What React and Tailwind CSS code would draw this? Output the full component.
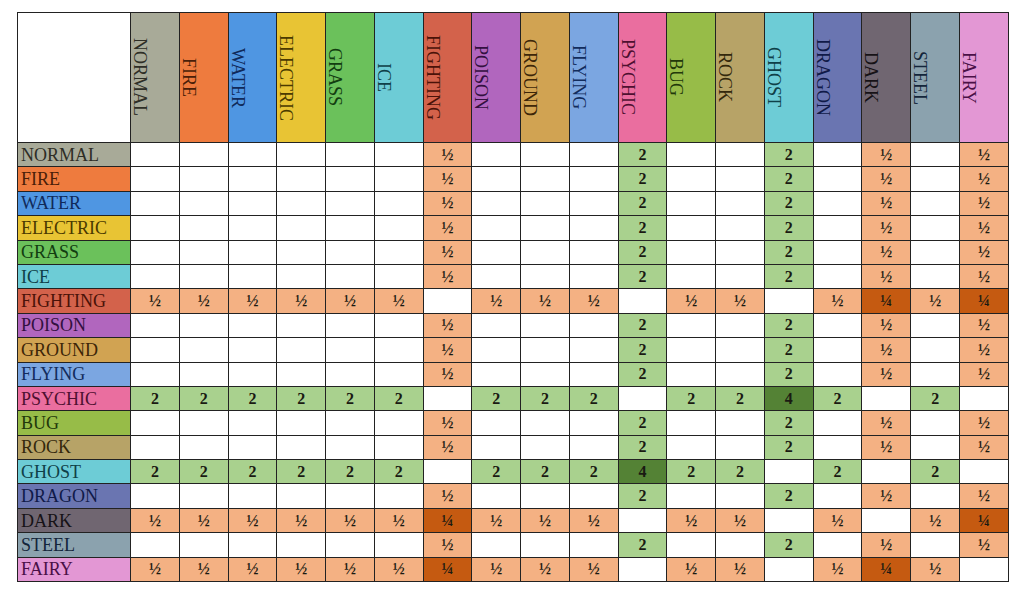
import React from "react";

const types = [
  { n: "NORMAL", bg: "bg-[#a8aa98]", fg: "text-[#2e2e26]" },
  { n: "FIRE", bg: "bg-[#ee7b3e]", fg: "text-[#4a1e08]" },
  { n: "WATER", bg: "bg-[#4f96e2]", fg: "text-[#102a5a]" },
  { n: "ELECTRIC", bg: "bg-[#e8c434]", fg: "text-[#4a3a00]" },
  { n: "GRASS", bg: "bg-[#6bc15b]", fg: "text-[#123d10]" },
  { n: "ICE", bg: "bg-[#6dccd6]", fg: "text-[#0f4048]" },
  { n: "FIGHTING", bg: "bg-[#d3624b]", fg: "text-[#4a1208]" },
  { n: "POISON", bg: "bg-[#b166be]", fg: "text-[#331040]" },
  { n: "GROUND", bg: "bg-[#d1a352]", fg: "text-[#3d2608]" },
  { n: "FLYING", bg: "bg-[#7ba6e1]", fg: "text-[#122c5c]" },
  { n: "PSYCHIC", bg: "bg-[#ea6e9f]", fg: "text-[#4e1030]" },
  { n: "BUG", bg: "bg-[#97bc48]", fg: "text-[#22380a]" },
  { n: "ROCK", bg: "bg-[#b7a367]", fg: "text-[#33280c]" },
  { n: "GHOST", bg: "bg-[#6dccd6]", fg: "text-[#0f4048]" },
  { n: "DRAGON", bg: "bg-[#6a75b1]", fg: "text-[#101a48]" },
  { n: "DARK", bg: "bg-[#706671]", fg: "text-[#161216]" },
  { n: "STEEL", bg: "bg-[#8ba2ae]", fg: "text-[#13253a]" },
  { n: "FAIRY", bg: "bg-[#e397d4]", fg: "text-[#4a1046]" },
];

const H = "½";
const Q = "¼";
const plain = ["", "", "", "", "", "", H, "", "", "", "2", "", "", "2", "", H, "", H];
const fighting = [H, H, H, H, H, H, "", H, H, H, "", H, H, "", H, Q, H, Q];
const psychic = ["2", "2", "2", "2", "2", "2", "", "2", "2", "2", "", "2", "2", "4", "2", "", "2", ""];
const ghost = ["2", "2", "2", "2", "2", "2", "", "2", "2", "2", "4", "2", "2", "", "2", "", "2", ""];
const dark = [H, H, H, H, H, H, Q, H, H, H, "", H, H, "", H, "", H, Q];
const fairy = [H, H, H, H, H, H, Q, H, H, H, "", H, H, "", H, Q, H, ""];

const rows = [
  plain, plain, plain, plain, plain, plain, fighting, plain, plain, plain,
  psychic, plain, plain, ghost, plain, dark, plain, fairy,
];

const cellBg = {
  "": "bg-white",
  [H]: "bg-[#f4b183]",
  [Q]: "bg-[#c55a11]",
  "2": "bg-[#a9d18e]",
  "4": "bg-[#548235]",
};

export default function App() {
  return (
    <div className="w-[1024px] h-[594px] bg-white pt-[12px] pl-[17px] font-['Liberation_Serif',serif]">
      <table className="table-fixed border-collapse w-[991px]">
        <colgroup>
          <col className="w-[113px]" />
          {types.map((t) => (
            <col key={t.n} className="w-[48.78px]" />
          ))}
        </colgroup>
        <thead>
          <tr className="h-[130px]">
            <th className="border border-[#222] bg-white" />
            {types.map((t) => (
              <th key={t.n} className={`border border-[#222] p-0 ${t.bg}`}>
                <div
                  className={`mx-auto [writing-mode:vertical-rl] text-[18px] font-normal leading-none ${t.fg}`}
                >
                  {t.n}
                </div>
              </th>
            ))}
          </tr>
        </thead>
        <tbody>
          {types.map((t, i) => (
            <tr key={t.n} className="h-[24.4px]">
              <td
                className={`border border-[#222] px-[3px] py-0 text-[18px] leading-none whitespace-nowrap ${t.bg} ${t.fg}`}
              >
                {t.n}
              </td>
              {rows[i].map((v, j) => (
                <td
                  key={j}
                  className={`border border-[#222] p-0 text-center text-[16px] font-bold leading-none text-[#1a1a12] ${cellBg[v]}`}
                >
                  {v}
                </td>
              ))}
            </tr>
          ))}
        </tbody>
      </table>
    </div>
  );
}
